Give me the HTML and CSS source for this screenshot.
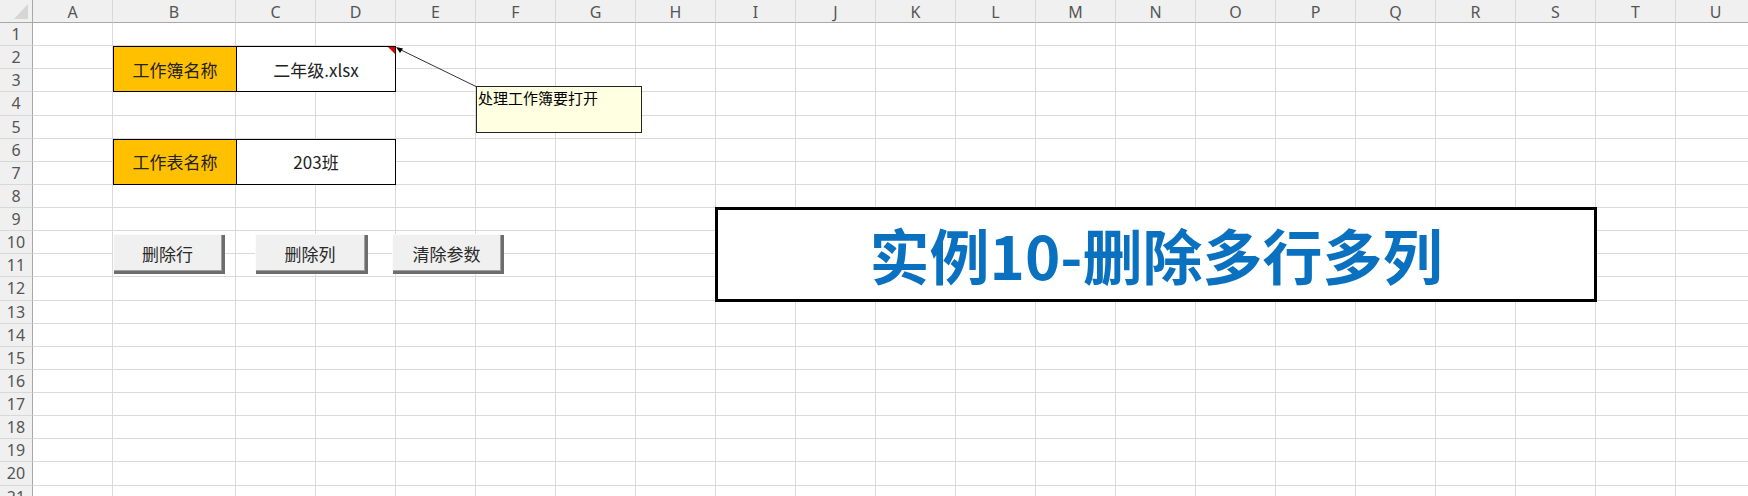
FILE: index.html
```html
<!DOCTYPE html>
<html lang="zh-CN">
<head>
<meta charset="utf-8">
<title>实例10-删除多行多列</title>
<link rel="stylesheet" href="styles.css">
</head>
<body>
<div class="sheet">
  <div class="corner">
    <svg class="corner-tri" width="33" height="23" viewBox="0 0 33 23"><polygon points="28,4 28,19 14,19" fill="#d6d6d6"/></svg>
  </div>
  <div class="colhead">A</div><div class="colhead">B</div><div class="colhead">C</div><div class="colhead">D</div>
  <div class="colhead">E</div><div class="colhead">F</div><div class="colhead">G</div><div class="colhead">H</div>
  <div class="colhead">I</div><div class="colhead">J</div><div class="colhead">K</div><div class="colhead">L</div>
  <div class="colhead">M</div><div class="colhead">N</div><div class="colhead">O</div><div class="colhead">P</div>
  <div class="colhead">Q</div><div class="colhead">R</div><div class="colhead">S</div><div class="colhead">T</div>
  <div class="colhead">U</div><div class="colhead"></div>

  <div class="rowhead r1">1</div><div class="rowhead r2">2</div><div class="rowhead r3">3</div>
  <div class="rowhead r4">4</div><div class="rowhead r5">5</div><div class="rowhead r6">6</div>
  <div class="rowhead r7">7</div><div class="rowhead r8">8</div><div class="rowhead r9">9</div>
  <div class="rowhead r10">10</div><div class="rowhead r11">11</div><div class="rowhead r12">12</div>
  <div class="rowhead r13">13</div><div class="rowhead r14">14</div><div class="rowhead r15">15</div>
  <div class="rowhead r16">16</div><div class="rowhead r17">17</div><div class="rowhead r18">18</div>
  <div class="rowhead r19">19</div><div class="rowhead r20">20</div><div class="rowhead r21">21</div>

  <div class="vline c2"></div><div class="vline c3"></div><div class="vline c4"></div><div class="vline c5"></div>
  <div class="vline c6"></div><div class="vline c7"></div><div class="vline c8"></div><div class="vline c9"></div>
  <div class="vline c10"></div><div class="vline c11"></div><div class="vline c12"></div><div class="vline c13"></div>
  <div class="vline c14"></div><div class="vline c15"></div><div class="vline c16"></div><div class="vline c17"></div>
  <div class="vline c18"></div><div class="vline c19"></div><div class="vline c20"></div><div class="vline c21"></div>
  <div class="vline c22"></div>

  <div class="hline r1"></div><div class="hline r2"></div><div class="hline r3"></div><div class="hline r4"></div>
  <div class="hline r5"></div><div class="hline r6"></div><div class="hline r7"></div><div class="hline r8"></div>
  <div class="hline r9"></div><div class="hline r10"></div><div class="hline r11"></div><div class="hline r12"></div>
  <div class="hline r13"></div><div class="hline r14"></div><div class="hline r15"></div><div class="hline r16"></div>
  <div class="hline r17"></div><div class="hline r18"></div><div class="hline r19"></div><div class="hline r20"></div>
  <div class="hline r21"></div>

  <div class="label label-book">工作簿名称</div>
  <div class="value value-book">二年级.xlsx<span class="comment-mark"></span></div>
  <div class="label label-sheet">工作表名称</div>
  <div class="value value-sheet">203班</div>

  <div class="title">实例10-删除多行多列</div>

  <svg class="leader" width="1748" height="496" viewBox="0 0 1748 496">
    <line x1="399" y1="49" x2="477" y2="87" stroke="#333" stroke-width="1"/>
    <polygon points="396,47 403,48.5 400,53" fill="#000"/>
  </svg>
  <div class="comment">处理工作簿要打开</div>

  <div class="buttons">
    <button class="btn btn-row">删除行</button>
    <button class="btn btn-col">删除列</button>
    <button class="btn btn-clear">清除参数</button>
  </div>
</div>
</body>
</html>
```
FILE: styles.css
```css
html, body {
  margin: 0;
  padding: 0;
  background: #ffffff;
}
body {
  width: 1748px;
  height: 496px;
  overflow: hidden;
  font-family: "Noto Sans CJK SC", "Noto Sans", sans-serif;
}
.sheet {
  position: relative;
  display: grid;
  grid-template-columns: 33px 80px 123px repeat(19, 80px);
  grid-template-rows: 23px repeat(21, 23.13px);
  width: 1756px;
  background: #ffffff;
}
.corner {
  grid-column: 1;
  grid-row: 1;
  background: #f0f0f0;
  border-right: 1px solid #a8a8a8;
  border-bottom: 1px solid #a8a8a8;
  box-sizing: border-box;
  position: relative;
}
.corner-tri {
  display: block;
}
.colhead {
  grid-row: 1;
  background: #f0f0f0;
  border-bottom: 1px solid #a8a8a8;
  border-right: 1px solid #d8d8d8;
  box-sizing: border-box;
  display: flex;
  align-items: center;
  justify-content: center;
  font-family: "Noto Sans", "Liberation Sans", sans-serif;
  font-size: 16px;
  color: #555;
  line-height: 1;
  padding-top: 1px;
}
.rowhead {
  grid-column: 1;
  background: #f0f0f0;
  border-right: 1px solid #a8a8a8;
  border-bottom: 1px solid #d8d8d8;
  box-sizing: border-box;
  display: flex;
  align-items: center;
  justify-content: center;
  font-family: "Noto Sans", "Liberation Sans", sans-serif;
  font-size: 16px;
  color: #555;
  line-height: 1;
}
.vline {
  grid-row: 2 / -1;
  border-right: 1px solid #dadada;
  box-sizing: border-box;
}
.hline {
  grid-column: 2 / -1;
  border-bottom: 1px solid #dadada;
  box-sizing: border-box;
}
.c2 { grid-column: 2; } .c3 { grid-column: 3; } .c4 { grid-column: 4; } .c5 { grid-column: 5; }
.c6 { grid-column: 6; } .c7 { grid-column: 7; } .c8 { grid-column: 8; } .c9 { grid-column: 9; }
.c10 { grid-column: 10; } .c11 { grid-column: 11; } .c12 { grid-column: 12; } .c13 { grid-column: 13; }
.c14 { grid-column: 14; } .c15 { grid-column: 15; } .c16 { grid-column: 16; } .c17 { grid-column: 17; }
.c18 { grid-column: 18; } .c19 { grid-column: 19; } .c20 { grid-column: 20; } .c21 { grid-column: 21; }
.c22 { grid-column: 22; }

.r1 { grid-row: 2; } .r2 { grid-row: 3; } .r3 { grid-row: 4; } .r4 { grid-row: 5; }
.r5 { grid-row: 6; } .r6 { grid-row: 7; } .r7 { grid-row: 8; } .r8 { grid-row: 9; }
.r9 { grid-row: 10; } .r10 { grid-row: 11; } .r11 { grid-row: 12; } .r12 { grid-row: 13; }
.r13 { grid-row: 14; } .r14 { grid-row: 15; } .r15 { grid-row: 16; } .r16 { grid-row: 17; }
.r17 { grid-row: 18; } .r18 { grid-row: 19; } .r19 { grid-row: 20; } .r20 { grid-row: 21; }
.r21 { grid-row: 22; }

.label, .value {
  display: flex;
  align-items: center;
  justify-content: center;
  font-size: 17px;
  color: #222;
  box-sizing: border-box;
  border: 1px solid #000;
  line-height: 1;
  position: relative;
  z-index: 2;
}
.label {
  grid-column: 3;
  background: #ffc000;
  margin-right: -1px;
}
.value {
  grid-column: 4 / span 2;
  background: #ffffff;
  margin-left: 0;
}
.label-book, .value-book { grid-row: 3 / span 2; }
.label-sheet, .value-sheet { grid-row: 7 / span 2; }

.comment-mark {
  position: absolute;
  top: 0;
  right: 0;
  width: 0;
  height: 0;
  border-top: 7px solid #e00000;
  border-left: 7px solid transparent;
}

.title {
  grid-column: 10 / 21;
  grid-row: 10 / 14;
  margin: -1px;
  border: 3px solid #000;
  box-sizing: border-box;
  background: #ffffff;
  display: flex;
  align-items: center;
  justify-content: center;
  font-family: "Noto Sans CJK SC", sans-serif;
  font-weight: 700;
  font-size: 60px;
  color: #0a70c0;
  line-height: 1;
  position: relative;
  z-index: 2;
}

.leader {
  position: absolute;
  left: 0;
  top: 0;
  z-index: 3;
  pointer-events: none;
}
.comment {
  position: absolute;
  left: 476px;
  top: 86px;
  width: 166px;
  height: 47px;
  box-sizing: border-box;
  background: #ffffe1;
  border: 1px solid #222;
  font-size: 15px;
  color: #000;
  line-height: 1;
  padding: 3px 0 0 1px;
  z-index: 4;
}

.buttons {
  position: absolute;
  left: 113px;
  top: 234px;
  display: flex;
  z-index: 4;
}
.btn {
  height: 40px;
  box-sizing: border-box;
  background: #f0f0f0;
  border: none;
  border-top: 1px solid #fbfbfb;
  border-left: 1px solid #fbfbfb;
  box-shadow: inset -3px -3px 0 #6d6d6d, inset -4px -4px 0 #a0a0a0;
  font-family: "Noto Sans CJK SC", sans-serif;
  font-size: 17px;
  color: #2a2a2a;
  padding: 0 4px 3px 0;
  line-height: 1;
}
.btn-row { width: 112px; }
.btn-col { width: 113px; margin-left: 30px; }
.btn-clear { width: 112px; margin-left: 24px; }
```
